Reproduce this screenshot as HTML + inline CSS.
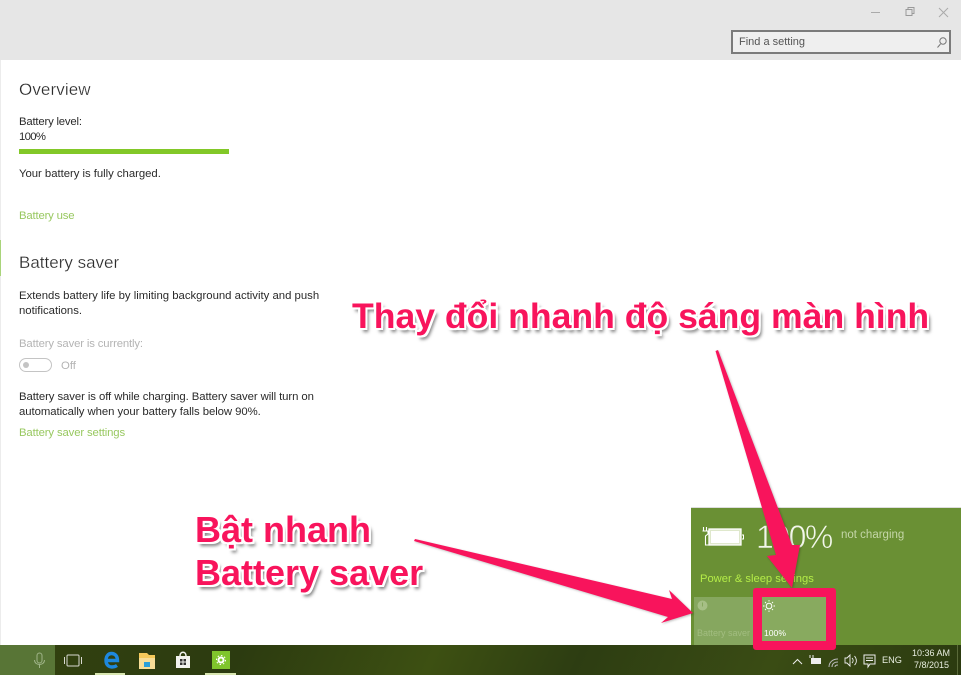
<!DOCTYPE html>
<html><head><meta charset="utf-8">
<style>
html,body{margin:0;padding:0;background:#fff}
#r{position:relative;width:961px;height:675px;overflow:hidden;background:#fff;font-family:"Liberation Sans",sans-serif;color:#222}
.t{position:absolute;white-space:nowrap;font-size:11.35px;line-height:15px;color:#2a2a2a}
.h{position:absolute;white-space:nowrap;font-size:17px;line-height:22px;color:#2b2b2b;-webkit-text-stroke:.25px #fff}
.l{color:#98c860}
.g{color:#b4b4b4}
.ov{position:absolute;white-space:nowrap;font-weight:bold;color:#f8145c;font-size:36px;line-height:44px;
text-shadow:2px 0 0 #fff,-2px 0 0 #fff,0 2px 0 #fff,0 -2px 0 #fff,2px 2px 0 #fff,-2px -2px 0 #fff,2px -2px 0 #fff,-2px 2px 0 #fff,3px 4px 3px rgba(0,0,0,.5)}
svg{position:absolute;left:0;top:0}
</style></head><body><div id="r">
<div style="position:absolute;left:0;top:0;width:961px;height:60px;background:#e6e6e6"></div>
<div style="position:absolute;left:0;top:60px;width:1px;height:585px;background:#ececec"></div>
<div style="position:absolute;left:0;top:240px;width:1px;height:36px;background:#a9d47a"></div>
<div style="position:absolute;left:731px;top:30px;width:216px;height:20px;border:2px solid #7b7b7b;background:#efefef"></div>
<div class="t" style="left:739px;top:35px;color:#555;font-size:11px">Find a setting</div>

<div class="h" style="left:19px;top:79px;letter-spacing:.1px">Overview</div>
<div class="t" style="left:19px;top:115px;letter-spacing:-.2px">Battery level:</div>
<div class="t" style="left:19px;top:130px;letter-spacing:-.7px">100%</div>
<div style="position:absolute;left:19px;top:149px;width:210px;height:5px;background:#82c828"></div>
<div class="t" style="left:19px;top:167px;letter-spacing:-.03px">Your battery is fully charged.</div>
<div class="t l" style="left:19px;top:209px;letter-spacing:-.18px">Battery use</div>
<div class="h" style="left:19px;top:252px">Battery saver</div>
<div class="t" style="left:19px;top:289px">Extends battery life by limiting background activity and push</div>
<div class="t" style="left:19px;top:304px">notifications.</div>
<div class="t g" style="left:19px;top:337px;letter-spacing:-.15px">Battery saver is currently:</div>
<div style="position:absolute;left:19px;top:358px;width:31px;height:12px;border:1px solid #c4c4c4;border-radius:7px"></div>
<div style="position:absolute;left:23px;top:362px;width:6px;height:6px;border-radius:3px;background:#c4c4c4"></div>
<div class="t g" style="left:61px;top:359px">Off</div>
<div class="t" style="left:19px;top:390px;letter-spacing:-.08px">Battery saver is off while charging. Battery saver will turn on</div>
<div class="t" style="left:19px;top:405px;letter-spacing:-.06px">automatically when your battery falls below 90%.</div>
<div class="t l" style="left:19px;top:426px;letter-spacing:-.14px">Battery saver settings</div>

<div style="position:absolute;left:691px;top:508px;width:270px;height:137px;background:#6a9034"></div>
<div style="position:absolute;left:691px;top:507px;width:270px;height:1px;background:#ddd"></div>
<div style="position:absolute;left:694px;top:597px;width:68px;height:48px;background:#86a75f"></div>
<div style="position:absolute;left:762px;top:597px;width:64px;height:44px;background:#88aa5f"></div>
<div class="t" style="left:756px;top:514px;font-size:32px;line-height:46px;letter-spacing:-1.5px;color:#f2f6ea;-webkit-text-stroke:.6px #6a9034">100%</div>
<div class="t" style="left:841px;top:528px;color:#c4d6a8;font-size:11.5px">not charging</div>
<div class="t" style="left:700px;top:572px;color:#b4ec48;font-size:11.2px">Power &amp; sleep settings</div>
<div class="t" style="left:697px;top:627px;font-size:9px;line-height:12px;color:#a2bd80">Battery saver</div>
<div class="t" style="left:764px;top:627px;font-size:8.6px;line-height:12px;color:#fff">100%</div>

<div style="position:absolute;left:0;top:645px;width:961px;height:30px;background:linear-gradient(115deg,#33420f 0,#2c3b10 25%,#3d5012 45%,#2d3d12 60%,#3a4c14 80%,#2b3a10 100%)"></div>
<div style="position:absolute;left:0;top:645px;width:55px;height:30px;background:#587536"></div>
<div style="position:absolute;left:95px;top:673px;width:30px;height:2px;background:#d8e6b0"></div>
<div style="position:absolute;left:205px;top:673px;width:31px;height:2px;background:#d8e6b0"></div>
<div style="position:absolute;left:212px;top:651px;width:18px;height:18px;background:#7fc52c"></div>
<div class="t" style="left:882px;top:654px;font-size:9.2px;line-height:12px;color:#e8eee0">ENG</div>
<div class="t" style="left:912px;top:647px;font-size:9px;line-height:12px;color:#e8eee0">10:36 AM</div>
<div class="t" style="left:914px;top:659px;font-size:9px;line-height:12px;color:#e8eee0">7/8/2015</div>

<svg width="961" height="675" viewBox="0 0 961 675" fill="none">
<!-- window controls -->
<path d="M871 12.5h9" stroke="#aaa"/>
<path d="M906 9.5h6v6h-6zM908 9.500v-2h6v6h-2" stroke="#999"/>
<path d="M939 8l9 9M948 8l-9 9" stroke="#aaa"/>
<circle cx="943" cy="41" r="3.2" stroke="#777"/><path d="M940.500 44l-3 3.500" stroke="#777"/>
<!-- flyout icons -->
<path d="M703.500 527v4M706.500 527v4M702.500 531h5.500v3l-2.500 2v9h3" stroke="#fff" stroke-width="1.100"/>
<rect x="709" y="529" width="32" height="16" fill="#dfe8cc" stroke="#fff" stroke-width="1.300"/><rect x="711" y="531" width="28" height="12" fill="#fff"/>
<path d="M742 535h1.500v4H742" stroke="#fff"/>
<circle cx="702.500" cy="605.500" r="5" fill="#a6bf86"/><path d="M702.500 602.500v4" stroke="#86a75f"/>
<circle cx="769" cy="606" r="2.800" stroke="#fff"/>
<path d="M769 600v1.500M769 610.500v1.500M763 606h1.500M773.500 606h1.500M765 602l1 1M772 609l1 1M773 602l-1 1M766 609l-1 1" stroke="#fff" stroke-width=".9"/>
<!-- taskbar left -->
<rect x="37" y="653" width="5" height="10" rx="2.500" stroke="#9fb488"/><path d="M34.500 660c0 6 10 6 10 0M39.500 665v3" stroke="#9fb488"/>
<rect x="67" y="655" width="12" height="11" rx="1" stroke="#d8d8d0"/><path d="M64.500 657v7M81.500 657v7" stroke="#d8d8d0"/>
<path d="M106 660.500h11.500c0-4.500-2.500-7-6-7-3.500 0-5.500 3-5.500 7 0 4.500 3 6.500 6 6.500 2 0 3.500-.5 5-1.500" stroke="#1e88de" stroke-width="3.400" fill="none"/>
<path d="M139 653h8l2 2h6v14h-16z" fill="#f4c95a"/><rect x="139" y="658" width="16" height="11" fill="#f7dd96"/><rect x="144" y="662" width="6" height="5" fill="#2a9fd8"/>
<path d="M176 656h14v12h-14z" fill="#f2f2ee"/><path d="M180 656c0-5 6-5 6 0" stroke="#f2f2ee" stroke-width="1.500"/>
<path d="M180 659h2.500v2.500H180zM183.500 659h2.500v2.500h-2.500zM180 662.500h2.500V665H180zM183.500 662.500h2.500V665h-2.500z" fill="#333"/>
<circle cx="221" cy="660" r="2.500" stroke="#fff" stroke-width="2"/><circle cx="221" cy="660" r="4.500" stroke="#fff" stroke-dasharray="1.500 2"/>
<!-- tray -->
<path d="M793 664l4.500-4.500 4.500 4.500" stroke="#eee"/>
<rect x="811" y="658" width="10" height="6" fill="#eee"/><path d="M810 655v3M813 655v3" stroke="#eee"/>
<path d="M829 667c0-5 4-8 9-8M832 667c0-3 2-5 6-5M835 667c0-1 1-2 3-2" stroke="#bbb"/>
<path d="M845 658h2l3-3v11l-3-3h-2zM852 658c1.500 1.500 1.500 3.500 0 5M854.500 656c2.500 3 2.500 6.500 0 9" stroke="#eee" stroke-width=".9"/>
<path d="M864 655h11v9h-5l-2 3v-3h-4zM866 658h7M866 660.500h7" stroke="#eee"/>
<path d="M957.500 645v30" stroke="#5a6a3a"/>
<!-- frame + arrows -->
<g style="filter:drop-shadow(1px 1px 1px rgba(0,0,0,.25))">
<path d="M715.500 351l2.500-1 74 195 8 0-8 43-25-32 9-1-60.500-204z" fill="#f8145c"/>
<path d="M414 541l1-2 257 60-3-9 24 23-32 10 7-6z" fill="#f8145c"/>
</g>
<path fill-rule="evenodd" d="M756 588h77a3 3 0 0 1 3 3v56a3 3 0 0 1-3 3h-77a3 3 0 0 1-3-3v-56a3 3 0 0 1 3-3zM762 597v44h64v-44z" fill="#f8145c"/>
</svg>

<div class="ov" style="left:352px;top:294px;font-size:35.6px">Thay đổi nhanh độ sáng màn hình</div>
<div class="ov" style="left:195px;top:508px">Bật nhanh</div>
<div class="ov" style="left:195px;top:551px">Battery saver</div>
</div></body></html>
